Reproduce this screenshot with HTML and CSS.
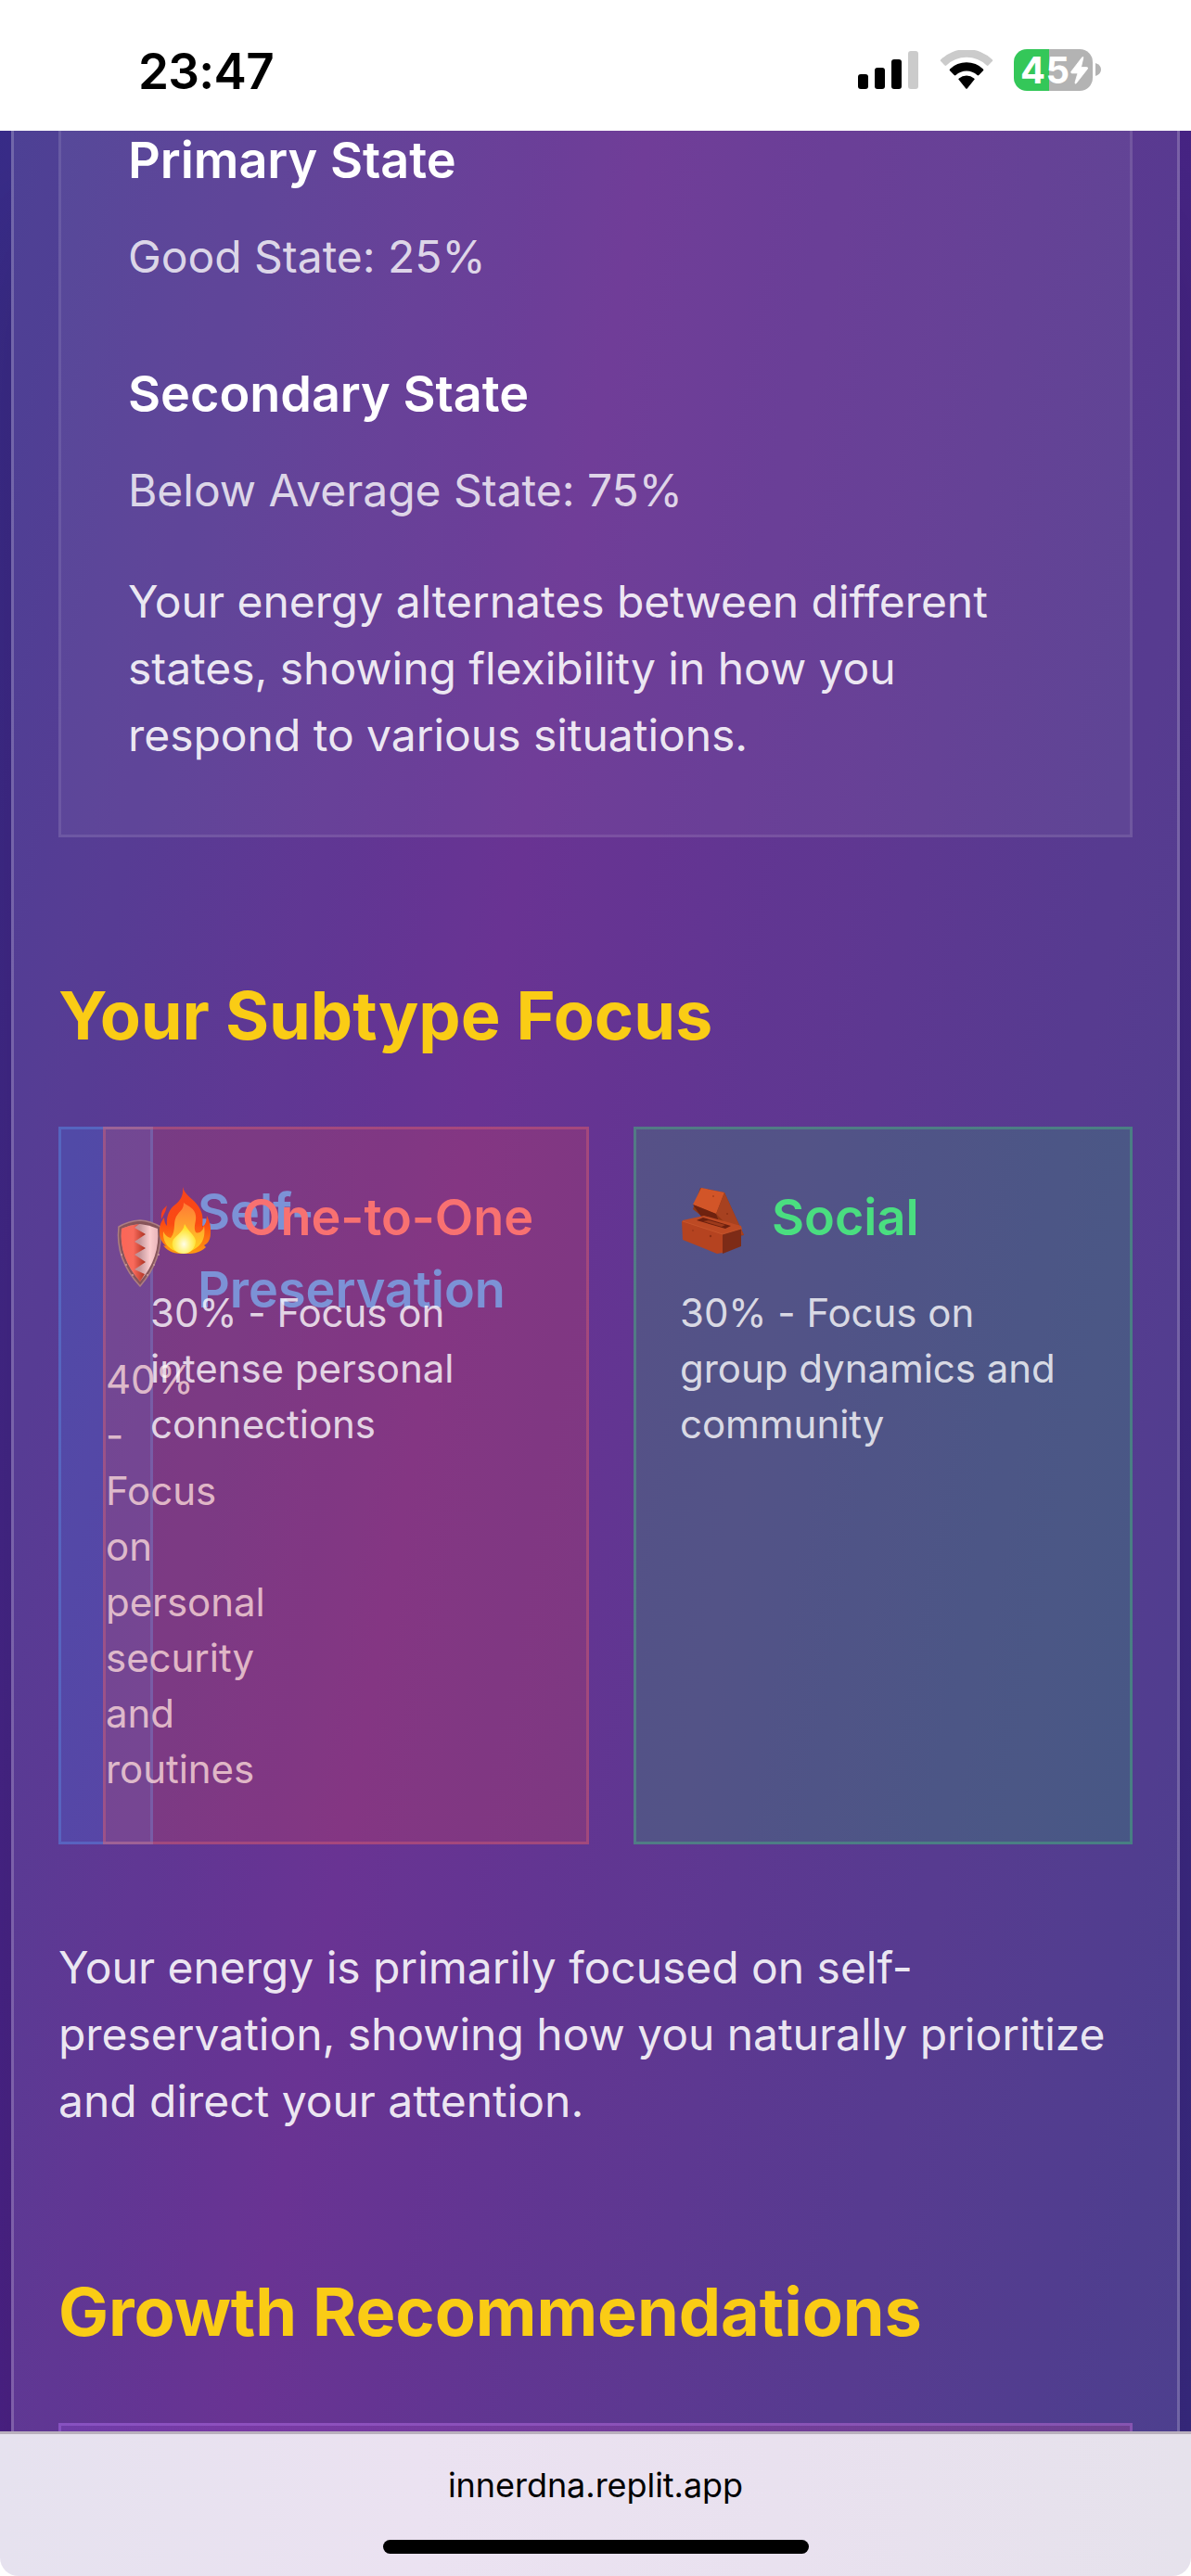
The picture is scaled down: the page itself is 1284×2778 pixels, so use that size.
FILE: index.html
```html
<!DOCTYPE html>
<html lang="en">
<head>
<meta charset="utf-8">
<title>Inner DNA</title>
<link rel="stylesheet" href="styles.css">
</head>
<body>
<header class="status">
  <span class="time">23:47</span>
  <div class="indicators">
    <svg class="signal" viewBox="0 0 65 41" width="65" height="41">
      <rect x="0" y="25" width="11" height="16" rx="3"/>
      <rect x="18" y="18" width="11" height="23" rx="3"/>
      <rect x="36" y="9" width="11" height="32" rx="3"/>
      <rect x="54" y="0" width="11" height="41" rx="3" fill="#cbcbcb"/>
    </svg>
    <svg class="wifi" viewBox="0 0 58 42" width="58" height="42">
      <path fill="#cbcbcb" d="M1.2 12.1a1.3 1.3 0 0 1 0-1.8A40 40 0 0 1 56.8 10.3a1.3 1.3 0 0 1 0 1.8l-4.3 4.4a1.3 1.3 0 0 1-1.8 0A31.600 31.600 0 0 0 7.300 16.500a1.300 1.300 0 0 1-1.800 0z"/>
      <path d="M11.100 22.300a1.300 1.300 0 0 1 0-1.900a25.900 25.900 0 0 1 35.800 0a1.300 1.300 0 0 1 0 1.900l-4.600 4.700a1.300 1.300 0 0 1-1.800 0a16.800 16.800 0 0 0-23 0a1.300 1.300 0 0 1-1.800 0z"/>
      <path d="M20.900 32.300a1.200 1.200 0 0 1 0-1.900a12.400 12.400 0 0 1 16.200 0a1.200 1.200 0 0 1 0 1.900L29.900 41.300a1.200 1.200 0 0 1-1.800 0z"/>
    </svg>
    <div class="battery">
      <span class="level">45</span>
      <svg class="bolt" viewBox="0 0 20 30" width="20" height="30"><path fill="#fff" stroke="#fff" stroke-width=".8" stroke-linejoin="round" d="M12.700.7Q14.300-.3 13.700 2L11.500 11.500H17.600Q19.400 11.600 18.300 13.400L6.300 28.800Q4.600 30 5.100 27.600L7.900 17.900H1.600Q0 17.600 1 16z"/></svg>
    </div>
    <svg class="nub" viewBox="0 0 6 14" width="6" height="14"><path fill="#b3b3b3" d="M0 0Q6 2 6 7T0 14z"/></svg>
  </div>
</header>

<main class="page">
  <div class="panel">
    <section class="states">
      <h3 class="state-name">Primary State</h3>
      <p class="state-value">Good State: 25%</p>
      <h3 class="state-name">Secondary State</h3>
      <p class="state-value last">Below Average State: 75%</p>
      <p class="note">Your energy alternates between different states, showing flexibility in how you respond to various situations.</p>
    </section>

    <h2 class="title">Your Subtype Focus</h2>
    <section class="subtypes">
      <article class="subtype self">
        <div class="head">
          <svg class="icon" viewBox="0 0 78 96" width="78" height="96">
            <defs>
              <linearGradient id="sl" x1="0" x2="1"><stop offset="0" stop-color="#ff6f5c"/><stop offset=".5" stop-color="#fb7361"/><stop offset="1" stop-color="#9c2c18"/></linearGradient>
              <linearGradient id="sr" x1="0" x2="1"><stop offset="0" stop-color="#a898a0"/><stop offset=".5" stop-color="#b9aab0"/><stop offset=".78" stop-color="#ffeef0"/><stop offset="1" stop-color="#e8d0d6"/></linearGradient>
            </defs>
            <path d="M37 14Q49 15 59 21Q62 56 37 85Q10 56 14 21Q24 15 37 14Z" fill="#6c5860" stroke="#9d8c90" stroke-width="1.500"/>
            <path d="M37 18Q47 19 56 23Q59 54 37 80Q14 54 17 23Q26 19 37 18Z" fill="url(#sr)"/>
            <path d="M36 18L31 22L43 29L31 37L43 44L31 51L43 59L31 67L42 72L37 80Q14 54 17 23Q26 19 36 18Z" fill="url(#sl)"/>
            <g fill="#c2b0b2"><circle cx="17" cy="51" r="1"/><circle cx="22" cy="62" r="1"/><circle cx="29" cy="73" r="1"/><circle cx="57" cy="51" r="1"/><circle cx="52" cy="62" r="1"/><circle cx="45" cy="73" r="1"/></g>
          </svg>
          <h3 class="name">Self-Preservation</h3>
        </div>
        <p class="desc">40% - Focus on personal security and routines</p>
      </article>
      <article class="subtype one">
        <div class="head">
          <svg class="icon" viewBox="0 0 78 96" width="78" height="96">
            <defs>
              <linearGradient id="f1" x1="0" x2="0" y1="0" y2="1"><stop offset="0" stop-color="#f8431c"/><stop offset=".55" stop-color="#fb4b12"/><stop offset="1" stop-color="#ff9a10"/></linearGradient>
              <linearGradient id="f2" x1="0" x2="0" y1="0" y2="1"><stop offset="0" stop-color="#ff7a35"/><stop offset=".45" stop-color="#ffa02e"/><stop offset="1" stop-color="#ffd91c"/></linearGradient>
              <radialGradient id="f3" cx=".5" cy=".68" r=".55"><stop offset="0" stop-color="#fffde8"/><stop offset=".45" stop-color="#fff48a"/><stop offset="1" stop-color="#ffe128"/></radialGradient>
            </defs>
            <path fill="#f6401f" d="M18 34Q17 40 14 45L12 49Q11 42 14 38Q16 36 18 34Z"/>
            <path fill="url(#f1)" d="M35 14C37 23 47 27 52 35C57 43 57 48 56 57Q59 55 60 52Q61 48 61 45Q66 55 65 64Q65 71 61 75L58 77L60 79C53 86 44 86 36 86C27 86 20 85 14 77L17 78Q9 71 10 61Q10 53 15 47Q15 53 18 56C17 45 21 37 27 33C32 29 36 24 35 14Z"/>
            <path fill="url(#f2)" d="M36 31C41 35 48 37 49 45C50 51 46 57 49 63C53 65 57 61 58 56C60 69 56 81 37 85C20 84 13 74 14 62Q17 68 22 69C29 60 23 51 30 43C33 39 36 38 36 31Z"/>
            <path fill="url(#f3)" d="M37 54C41 62 48 66 49 72C49 80 43 86 36 86C28 86 22 80 24 73C25 67 36 64 37 54Z"/>
          </svg>
          <h3 class="name">One-to-One</h3>
        </div>
        <p class="desc">30% - Focus on intense personal connections</p>
      </article>
      <article class="subtype social">
        <div class="head">
          <svg class="icon" viewBox="0 0 78 96" width="78" height="96">
            <path d="M22 15L48 20L69 66L54 69L14 38Z" fill="#913714"/>
            <path d="M23 15L48 20L39 43L14 33Z" fill="#d25528"/>
            <path d="M14 33L39 43L44 57L25 49Z" fill="#6e220f"/>
            <path d="M48 20L69 66L61 65L39 43Z" fill="#a74120"/>
            <path d="M3 50L26 45L66 56L67 60L46 67L2 52Z" fill="#bd4a24"/>
            <path d="M18 50L25 47L55 56L49 59Z" fill="#6b200f"/>
            <path d="M25 51L31 50L49 55L45 57Z" fill="#9d3a1b"/>
            <path d="M2 51L46 65V85L40 86L3 71Z" fill="#b54320"/>
            <path d="M46 65L66 59V78L46 86Z" fill="#7d2b17"/>
            <path d="M3 51L46 65L66 59" fill="none" stroke="#c9582f" stroke-width=".8"/>
            <g fill="#8d3015"><circle cx="33" cy="67" r="1.200"/><circle cx="14" cy="61" r=".8"/><circle cx="51" cy="43" r="1"/><circle cx="36" cy="24" r=".8"/></g>
          </svg>
          <h3 class="name">Social</h3>
        </div>
        <p class="desc">30% - Focus on group dynamics and community</p>
      </article>
    </section>
    <p class="note focus">Your energy is primarily focused on self-preservation, showing how you naturally prioritize and direct your attention.</p>

    <h2 class="title growth-title">Growth Recommendations</h2>
    <section class="growth"></section>
  </div>
</main>

<footer class="toolbar">
  <div class="sheet">
    <span class="url">innerdna.replit.app</span>
    <span class="home"></span>
  </div>
</footer>
</body>
</html>
```
FILE: styles.css
```css
* { box-sizing: border-box; margin: 0; padding: 0; }

body {
  display: flex;
  flex-direction: column;
  width: 1284px;
  height: 2778px;
  overflow: hidden;
  background: #fff;
  color: #fff;
  font-family: Inter, "Liberation Sans", sans-serif;
  letter-spacing: -0.04px;
}

svg { display: block; flex: none; }

/* status bar */
.status {
  display: flex;
  justify-content: space-between;
  align-items: flex-start;
  flex: none;
  height: 141px;
  padding: 53px 97px 0 149px;
  color: #000;
}
.time { font-size: 53px; line-height: 48px; font-weight: 600; letter-spacing: -0.7px; }
.indicators { display: flex; align-items: flex-start; }
.signal { margin: 2px 23px 0 0; }
.wifi { margin: 1px 22px 0 0; }
.battery {
  display: flex;
  align-items: center;
  width: 85px;
  height: 45px;
  padding-left: 7px;
  border-radius: 14px;
  background: linear-gradient(90deg, #34c759 38px, #b3b3b3 38px);
}
.level { width: 54px; font-size: 40px; line-height: 45px; font-weight: 650; color: #fff; letter-spacing: 0.5px; }
.nub { margin: 15px 0 0 3px; }

/* page */
.page {
  flex: 1;
  min-height: 0;
  padding: 0 12px;
  overflow: hidden;
  background: linear-gradient(to bottom right, #1e3a8a, #581c87, #312e81) 0 -3281px / 1284px 7200px;
}
.panel {
  height: 2700px;
  padding: 0 48px;
  border: 3px solid rgba(255, 255, 255, .2);
  border-width: 0 3px;
  background: rgba(255, 255, 255, .1);
  box-shadow: 0 75px 150px -36px rgba(0, 0, 0, .25);
}

.states {
  height: 762px;
  padding: 0 72px;
  border: 3px solid rgba(255, 255, 255, .1);
  border-top: 0;
  background: rgba(255, 255, 255, .05);
}
.state-name {
  margin-bottom: 26px;
  font-size: 54px;
  line-height: 84px;
  font-weight: 600;
}
.state-name:first-child { margin-top: -10px; float: left; width: 100%; }
.state-value {
  clear: both;
  margin-bottom: 70px;
  font-size: 48px;
  line-height: 72px;
  color: rgba(255, 255, 255, .8);
}
.state-value.last { margin-bottom: 48px; }
.note { font-size: 48px; line-height: 72px; color: rgba(255, 255, 255, .9); }

.title {
  margin: 144px 0 72px;
  font-size: 72px;
  line-height: 96px;
  font-weight: 700;
  color: #facc15;
}
.growth-title { margin-top: 143px; }

/* the first track collapses, so its card spills under the second one */
.subtypes {
  display: grid;
  grid-template-columns: 0 524px 538px;
  gap: 48px;
}
.subtype { padding: 48px; border: 3px solid; }
.self { width: 102px; background: rgba(59, 130, 246, .2); border-color: rgba(96, 165, 250, .3); }
.one { position: relative; background: rgba(239, 68, 68, .2); border-color: rgba(248, 113, 113, .3); }
.social { padding-left: 47px; background: rgba(34, 197, 94, .2); border-color: rgba(74, 222, 128, .3); }
.head { display: flex; align-items: center; gap: 21px; margin-bottom: 24px; }
.name { margin: -1px 0 1px; font-size: 54px; line-height: 84px; font-weight: 600; }
.self .name { color: #60a5fa; }
.one .name { color: #f87171; }
.social .name { color: #4ade80; }
.desc { font-size: 42px; line-height: 60px; color: rgba(255, 255, 255, .8); }
.focus { margin-top: 97px; }

.growth {
  height: 200px;
  border: 3px solid rgba(192, 132, 252, .3);
  background: linear-gradient(90deg, rgba(168, 85, 247, .2), rgba(236, 72, 153, .2)) border-box;
}

/* browser toolbar */
.toolbar { flex: none; height: 156px; }
.sheet {
  display: flex;
  flex-direction: column;
  align-items: center;
  height: 156px;
  border-top: 3px solid #b9b0bd;
  border-radius: 0 0 20px 20px;
  background: linear-gradient(90deg, #e6e2ef, #ebe2f1 35%, #e9e1ef 65%, #e6e2ec);
}
.url { margin-top: 31px; font-size: 36px; line-height: 48px; color: #000; }
.home { width: 459px; height: 15px; margin-top: 35px; border-radius: 8px; background: #000; }
```
